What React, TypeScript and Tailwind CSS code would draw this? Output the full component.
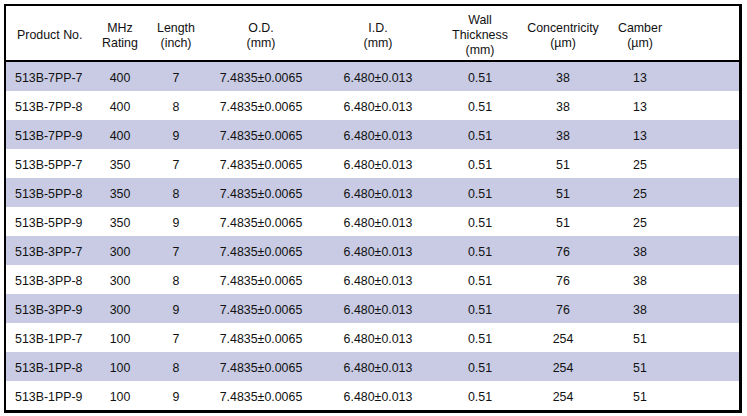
import React from 'react';

const cols = 'grid grid-cols-[89px_50px_62px_108px_126px_78px_88px_66px_1fr]';

const headers: string[][] = [
  ['Product No.'],
  ['MHz', 'Rating'],
  ['Length', '(inch)'],
  ['O.D.', '(mm)'],
  ['I.D.', '(mm)'],
  ['Wall', 'Thickness', '(mm)'],
  ['Concentricity', '(µm)'],
  ['Camber', '(µm)'],
];

const groups = [
  { code: '7', mhz: '400', conc: '38', camber: '13' },
  { code: '5', mhz: '350', conc: '51', camber: '25' },
  { code: '3', mhz: '300', conc: '76', camber: '38' },
  { code: '1', mhz: '100', conc: '254', camber: '51' },
];

const rows = groups.flatMap((g) =>
  ['7', '8', '9'].map((len) => [
    `513B-${g.code}PP-${len}`,
    g.mhz,
    len,
    '7.4835±0.0065',
    '6.480±0.013',
    '0.51',
    g.conc,
    g.camber,
  ])
);

const App: React.FC = () => {
  return (
    <div className="w-[747px] h-[416px] bg-white pl-[4px] pt-[4px] font-['Liberation_Sans',Arial,sans-serif] text-[12.4px] text-[#111]">
      <div className="w-[738px] h-[409px] border-l-2 border-t-2 border-r-[3px] border-b-[3px] border-black flex flex-col">
        {/* header */}
        <div className={`${cols} h-[56px] pt-[5px] items-center leading-[15px] border-b-2 border-black`}>
          {headers.map((lines, i) => (
            <div key={i} className={i === 0 ? 'pl-[11px] text-left' : 'text-center'}>
              {lines.map((l) => (
                <div key={l}>{l}</div>
              ))}
            </div>
          ))}
          <div />
        </div>

        {/* body */}
        <div className="flex-1 flex flex-col">
          {rows.map((r, ri) => (
            <div
              key={r[0]}
              className={`${cols} flex-1 pt-[4px] items-center ${ri % 2 === 0 ? 'bg-[#c8cbe3]' : 'bg-white'}`}
            >
              {r.map((cell, ci) => (
                <div key={ci} className={ci === 0 ? 'pl-[9px] text-left' : 'text-center'}>
                  {cell}
                </div>
              ))}
              <div />
            </div>
          ))}
        </div>
      </div>
    </div>
  );
};

export default App;
